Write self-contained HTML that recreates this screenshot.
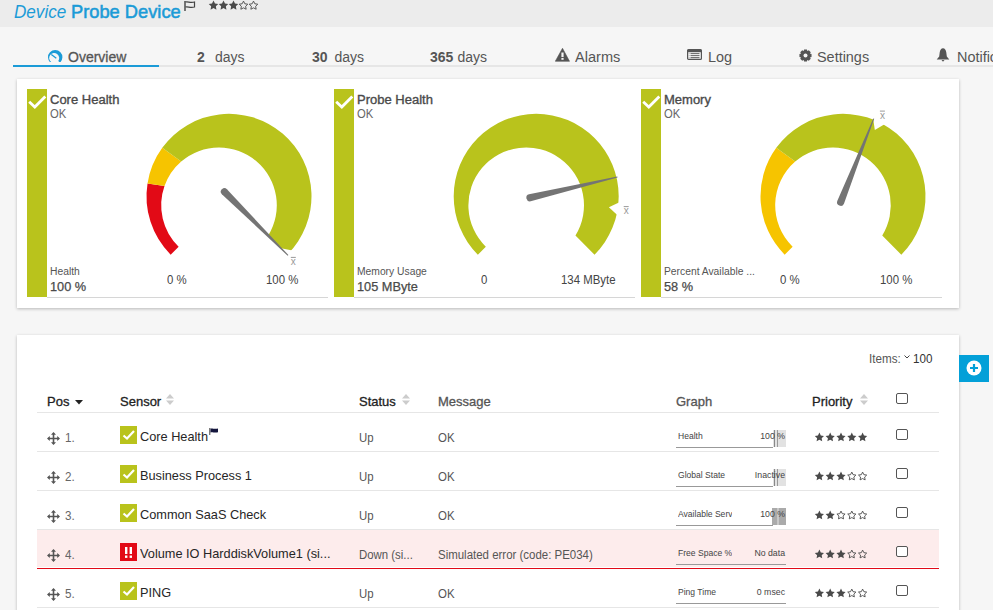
<!DOCTYPE html>
<html><head><meta charset="utf-8"><style>
*{margin:0;padding:0;box-sizing:border-box}
html,body{width:993px;height:610px;overflow:hidden;background:#f6f6f6;font-family:"Liberation Sans",sans-serif;position:relative}
.abs{position:absolute;white-space:nowrap}
.t{position:absolute;white-space:nowrap;transform-origin:0 0;line-height:1.15}
.tr{position:absolute;white-space:nowrap;transform-origin:100% 0;line-height:1.15;text-align:right}
#hdr{position:absolute;left:0;top:0;width:993px;height:27px;background:#ececec}
.title{position:absolute;top:1px;font-size:19px;color:#1b9bd7;white-space:nowrap;transform-origin:0 0}
.tab{position:absolute;top:49px;font-size:14px;color:#555;white-space:nowrap}
.tab b{font-weight:bold}
#tabline{position:absolute;left:13px;top:65px;width:980px;height:2px;background:#e6e6e6}
#tabact{position:absolute;left:13px;top:65px;width:146px;height:2px;background:#1b9bd7}
.panel{position:absolute;background:#fff;box-shadow:0 1px 3px rgba(0,0,0,0.25)}
.bar{position:absolute;top:89px;width:20px;height:208px;background:#b9c31c}
.tline{position:absolute;top:297px;width:281px;height:1px;background:#d6d6d6}
.rline{position:absolute;left:37px;width:902px;height:1px;background:#e6e6e6}
.ck{position:absolute;width:12px;height:11px;border:1.3px solid #555;border-radius:2px;background:#fff}
.gw-line{position:absolute;height:1px;background:#999}
</style></head><body>
<div id="hdr"></div>
<div class="title" style="left:13.5px;font-style:italic;transform:scaleX(0.9)">Device</div>
<div class="title" style="left:71px;font-weight:normal;-webkit-text-stroke:0.55px #1b9bd7;transform:scaleX(0.962)">Probe Device</div>
<svg class="abs" style="left:184px;top:1px" width="12" height="10" viewBox="0 0 12 10"><path d="M1,0 V10" stroke="#444" stroke-width="1.4"/><path d="M1.5,1 C4,0 6,2.5 10.5,1 V6 C6,7.5 4,5 1.5,6" stroke="#444" stroke-width="1.2" fill="none"/></svg>
<svg class="abs" style="left:208px;top:0px" width="52" height="11"><polygon points="5.50,0.60 6.97,3.58 10.26,4.05 7.88,6.37 8.44,9.65 5.50,8.10 2.56,9.65 3.12,6.37 0.74,4.05 4.03,3.58" fill="#4a4a4a"/>
<polygon points="15.50,0.60 16.97,3.58 20.26,4.05 17.88,6.37 18.44,9.65 15.50,8.10 12.56,9.65 13.12,6.37 10.74,4.05 14.03,3.58" fill="#4a4a4a"/>
<polygon points="25.50,0.60 26.97,3.58 30.26,4.05 27.88,6.37 28.44,9.65 25.50,8.10 22.56,9.65 23.12,6.37 20.74,4.05 24.03,3.58" fill="#4a4a4a"/>
<polygon points="35.50,1.10 36.82,3.78 39.78,4.21 37.64,6.30 38.15,9.24 35.50,7.85 32.85,9.24 33.36,6.30 31.22,4.21 34.18,3.78" fill="none" stroke="#4a4a4a" stroke-width="0.9" stroke-linejoin="round"/>
<polygon points="45.50,1.10 46.82,3.78 49.78,4.21 47.64,6.30 48.15,9.24 45.50,7.85 42.85,9.24 43.36,6.30 41.22,4.21 44.18,3.78" fill="none" stroke="#4a4a4a" stroke-width="0.9" stroke-linejoin="round"/></svg>

<div id="tabline"></div><div id="tabact"></div>
<svg class="abs" style="left:47px;top:49px" width="16" height="13" viewBox="0 0 16 13"><path d="M3.57,13.72 A7.2,7.2 0 1 1 12.83,13.72 L11.29,11.88 A5.0,5.0 0 1 0 4.18,12.99 Z" fill="#1b9bd7"/><path d="M4.3,5.5 L9.3,9.2" stroke="#1b9bd7" stroke-width="1.3"/></svg>
<div class="tab" style="left:68px;-webkit-text-stroke:0.3px #555">Overview</div>
<div class="tab" style="left:197px"><b>2</b></div><div class="tab" style="left:215px">days</div>
<div class="tab" style="left:312px"><b>30</b></div><div class="tab" style="left:334.5px">days</div>
<div class="tab" style="left:430px"><b>365</b></div><div class="tab" style="left:457.5px">days</div>
<svg class="abs" style="left:555px;top:47.5px" width="15" height="14" viewBox="0 0 15 14"><path d="M7.5,0.3 L14.5,13.3 H0.3 Z" fill="#555" stroke="#555" stroke-width="0.6" stroke-linejoin="round"/><rect x="6.4" y="4.5" width="2.2" height="4.6" fill="#f6f6f6"/><rect x="6.4" y="10" width="2.2" height="1.8" fill="#f6f6f6"/></svg>
<div class="tab" style="left:575px;transform:scaleX(1.04);transform-origin:0 0">Alarms</div>
<svg class="abs" style="left:687px;top:49px" width="15" height="11" viewBox="0 0 15 11"><rect x="0.6" y="0.6" width="13.8" height="9.8" rx="1" fill="none" stroke="#555" stroke-width="1.2"/><rect x="0.6" y="0.6" width="13.8" height="2.6" fill="#555"/><path d="M3.5,4.6 H12.5 M3.5,6.6 H12.5 M3.5,8.6 H12.5" stroke="#555" stroke-width="0.9"/><path d="M1.8,4.6 H2.4 M1.8,6.6 H2.4 M1.8,8.6 H2.4" stroke="#777" stroke-width="0.9"/></svg>
<div class="tab" style="left:708px;transform:scaleX(1.03);transform-origin:0 0">Log</div>
<svg class="abs" style="left:798.5px;top:48.5px" width="13" height="13" viewBox="0 0 13 13"><path d="M4.56,2.33 L5.11,0.46 L7.89,0.46 L8.44,2.33 L8.07,2.18 L9.79,1.24 L11.76,3.21 L10.82,4.93 L10.67,4.56 L12.54,5.11 L12.54,7.89 L10.67,8.44 L10.82,8.07 L11.76,9.79 L9.79,11.76 L8.07,10.82 L8.44,10.67 L7.89,12.54 L5.11,12.54 L4.56,10.67 L4.93,10.82 L3.21,11.76 L1.24,9.79 L2.18,8.07 L2.33,8.44 L0.46,7.89 L0.46,5.11 L2.33,4.56 L2.18,4.93 L1.24,3.21 L3.21,1.24 L4.93,2.18 Z" fill="#555"/><circle cx="6.5" cy="6.5" r="2" fill="#f6f6f6"/></svg>
<div class="tab" style="left:817px;transform:scaleX(1.03);transform-origin:0 0">Settings</div>
<svg class="abs" style="left:936px;top:48px" width="14" height="14" viewBox="0 0 14 14"><path d="M7,0.3 C8.8,0.3 10,2 10.3,4.5 L10.8,8.5 L13.3,11.6 H0.7 L3.2,8.5 L3.7,4.5 C4,2 5.2,0.3 7,0.3 Z" fill="#555"/><path d="M5.5,12 H8.5 L7,13.8 Z" fill="#555"/></svg>
<div class="tab" style="left:957px;transform:scaleX(1.03);transform-origin:0 0">Notifications</div>

<div class="panel" style="left:17px;top:79px;width:942px;height:229px"></div>
<div class="bar" style="left:27px"><svg width="20" height="22" viewBox="0 0 20 22" style="position:absolute;left:0;top:1.5px"><path d="M2.2,10.8 L7.8,16 L18.3,5.5" stroke="#fff" stroke-width="2.8" fill="none"/></svg></div>
<div class="t" style="left:50px;top:93px;font-size:12.5px;color:#4a4a4a;font-weight:normal;transform:scaleX(1.04);-webkit-text-stroke:0.35px #4a4a4a">Core Health</div>
<div class="t" style="left:50px;top:107px;font-size:12.5px;color:#666;font-weight:normal;transform:scaleX(0.9);">OK</div>
<div class="t" style="left:50px;top:265.5px;font-size:10px;color:#555;font-weight:normal;transform:scaleX(1.03);">Health</div>
<div class="t" style="left:50px;top:280px;font-size:12.5px;color:#4a4a4a;font-weight:normal;transform:scaleX(1.02);-webkit-text-stroke:0.25px #4a4a4a">100 %</div>
<div class="tline" style="left:47px"></div>

<div class="bar" style="left:334px"><svg width="20" height="22" viewBox="0 0 20 22" style="position:absolute;left:0;top:1.5px"><path d="M2.2,10.8 L7.8,16 L18.3,5.5" stroke="#fff" stroke-width="2.8" fill="none"/></svg></div>
<div class="t" style="left:357px;top:93px;font-size:12.5px;color:#4a4a4a;font-weight:normal;transform:scaleX(1.04);-webkit-text-stroke:0.35px #4a4a4a">Probe Health</div>
<div class="t" style="left:357px;top:107px;font-size:12.5px;color:#666;font-weight:normal;transform:scaleX(0.9);">OK</div>
<div class="t" style="left:357px;top:265.5px;font-size:10px;color:#555;font-weight:normal;transform:scaleX(1.03);">Memory Usage</div>
<div class="t" style="left:357px;top:280px;font-size:12.5px;color:#4a4a4a;font-weight:normal;transform:scaleX(1.02);-webkit-text-stroke:0.25px #4a4a4a">105 MByte</div>
<div class="tline" style="left:354px"></div>

<div class="bar" style="left:641px"><svg width="20" height="22" viewBox="0 0 20 22" style="position:absolute;left:0;top:1.5px"><path d="M2.2,10.8 L7.8,16 L18.3,5.5" stroke="#fff" stroke-width="2.8" fill="none"/></svg></div>
<div class="t" style="left:664px;top:93px;font-size:12.5px;color:#4a4a4a;font-weight:normal;transform:scaleX(1.04);-webkit-text-stroke:0.35px #4a4a4a">Memory</div>
<div class="t" style="left:664px;top:107px;font-size:12.5px;color:#666;font-weight:normal;transform:scaleX(0.9);">OK</div>
<div class="t" style="left:664px;top:265.5px;font-size:10px;color:#555;font-weight:normal;transform:scaleX(1.03);">Percent Available ...</div>
<div class="t" style="left:664px;top:280px;font-size:12.5px;color:#4a4a4a;font-weight:normal;transform:scaleX(1.02);-webkit-text-stroke:0.25px #4a4a4a">58 %</div>
<div class="tline" style="left:661px"></div>

<svg class="abs" style="left:0;top:0" width="993" height="310">
<path d="M170.66,254.64 A82.5,82.5 0 0 1 147.52,183.39 L164.49,186.08 A57.8,57.8 0 0 0 178.63,246.67 Z" fill="#e20a16"/>
<path d="M147.52,183.39 A82.5,82.5 0 0 1 162.26,147.81 L181.20,161.57 A57.8,57.8 0 0 0 164.49,186.08 Z" fill="#f6c400"/>
<path d="M162.26,147.81 A82.5,82.5 0 1 1 287.34,254.64 L268.25,235.55 A57.8,57.8 0 0 0 181.20,161.57 Z" fill="#b9c31c"/>
<path d="M292.49,250.53 L280.97,248.27 L283.23,259.79 Z" fill="#fff"/>
<text x="293.3" y="264.9" text-anchor="middle" font-size="10" fill="#999" font-family="Liberation Sans, sans-serif">x</text>
<line x1="290.8" y1="257.4" x2="295.8" y2="257.4" stroke="#999" stroke-width="1"/>
<path d="M221.86,194.25 L287.69,255.70 L288.40,254.99 L226.95,189.16 A3.6,3.6 0 0 0 221.86,194.25 Z" fill="#747474"/>
<path d="M477.86,254.64 A82.5,82.5 0 1 1 594.54,254.64 L575.45,235.55 A57.8,57.8 0 1 0 485.83,246.67 Z" fill="#b9c31c"/>
<path d="M619.49,202.20 L608.88,207.23 L617.54,215.15 Z" fill="#fff"/>
<text x="626.2" y="214.1" text-anchor="middle" font-size="10" fill="#999" font-family="Liberation Sans, sans-serif">x</text>
<line x1="623.7" y1="206.6" x2="628.7" y2="206.6" stroke="#999" stroke-width="1"/>
<path d="M530.71,201.31 L617.53,177.39 L617.30,176.42 L529.04,194.31 A3.6,3.6 0 0 0 530.71,201.31 Z" fill="#747474"/>
<path d="M784.66,254.64 A82.5,82.5 0 0 1 776.26,147.81 L795.20,161.57 A57.8,57.8 0 0 0 792.63,246.67 Z" fill="#f6c400"/>
<path d="M776.26,147.81 A82.5,82.5 0 1 1 901.34,254.64 L882.25,235.55 A57.8,57.8 0 0 0 795.20,161.57 Z" fill="#b9c31c"/>
<path d="M873.13,118.42 L874.82,130.04 L884.94,124.10 Z" fill="#fff"/>
<text x="882.4" y="118.6" text-anchor="middle" font-size="10" fill="#999" font-family="Liberation Sans, sans-serif">x</text>
<line x1="879.9" y1="111.1" x2="884.9" y2="111.1" stroke="#999" stroke-width="1"/>
<path d="M843.95,203.67 L874.20,118.85 L873.27,118.48 L837.26,201.02 A3.6,3.6 0 0 0 843.95,203.67 Z" fill="#747474"/>
</svg>
<div class="t" style="left:167px;top:273.5px;font-size:12px;color:#444;font-weight:normal;transform:scaleX(0.95);">0 %</div>
<div class="t" style="left:266px;top:273.5px;font-size:12px;color:#444;font-weight:normal;transform:scaleX(0.95);">100 %</div>
<div class="t" style="left:481px;top:273.5px;font-size:12px;color:#444;font-weight:normal;transform:scaleX(0.95);">0</div>
<div class="t" style="left:561px;top:273.5px;font-size:12px;color:#444;font-weight:normal;transform:scaleX(0.95);">134 MByte</div>
<div class="t" style="left:780px;top:273.5px;font-size:12px;color:#444;font-weight:normal;transform:scaleX(0.95);">0 %</div>
<div class="t" style="left:880px;top:273.5px;font-size:12px;color:#444;font-weight:normal;transform:scaleX(0.95);">100 %</div>
<div class="panel" style="left:17px;top:335px;width:942px;height:290px"></div>
<div class="t" style="left:869px;top:353px;font-size:12px;color:#555;font-weight:normal;transform:scaleX(0.97);">Items:</div>
<svg class="abs" style="left:904px;top:355px" width="6" height="4" viewBox="0 0 6 4"><path d="M0.5,0.5 L3,3 L5.5,0.5" stroke="#444" stroke-width="1" fill="none"/></svg>
<div class="t" style="left:913px;top:353px;font-size:12px;color:#333;font-weight:normal;transform:scaleX(0.97);">100</div>
<div class="abs" style="left:959px;top:355px;width:30px;height:27px;background:#03a0d8"></div>
<svg class="abs" style="left:965.5px;top:360px" width="16" height="16" viewBox="0 0 16 16"><circle cx="8" cy="8" r="7.5" fill="#fff"/><path d="M8,4 V12 M4,8 H12" stroke="#03a0d8" stroke-width="2.2"/></svg>
<div class="t" style="left:47px;top:394.5px;font-size:13px;color:#222;font-weight:normal;transform:scaleX(1.0);-webkit-text-stroke:0.3px #222">Pos</div>
<svg class="abs" style="left:75px;top:400px" width="8" height="5" viewBox="0 0 8 5"><path d="M0,0 H8 L4,4.5Z" fill="#222"/></svg>
<div class="t" style="left:120px;top:394.5px;font-size:13px;color:#222;font-weight:normal;transform:scaleX(1.0);-webkit-text-stroke:0.3px #222">Sensor</div>
<svg class="abs" style="left:166px;top:394px" width="8" height="11" viewBox="0 0 8 11"><path d="M0,4.5 L4,0 L8,4.5Z M0,6.5 L4,11 L8,6.5Z" fill="#ccc"/></svg>
<div class="t" style="left:359px;top:394.5px;font-size:13px;color:#222;font-weight:normal;transform:scaleX(1.0);-webkit-text-stroke:0.3px #222">Status</div>
<svg class="abs" style="left:402px;top:394px" width="8" height="11" viewBox="0 0 8 11"><path d="M0,4.5 L4,0 L8,4.5Z M0,6.5 L4,11 L8,6.5Z" fill="#ccc"/></svg>
<div class="t" style="left:438px;top:394.5px;font-size:13px;color:#555;font-weight:normal;transform:scaleX(1.0);-webkit-text-stroke:0.3px #555">Message</div>
<div class="t" style="left:676px;top:394.5px;font-size:13px;color:#555;font-weight:normal;transform:scaleX(1.0);-webkit-text-stroke:0.3px #555">Graph</div>
<div class="t" style="left:812px;top:394.5px;font-size:13px;color:#222;font-weight:normal;transform:scaleX(1.0);-webkit-text-stroke:0.3px #222">Priority</div>
<svg class="abs" style="left:860px;top:394px" width="8" height="11" viewBox="0 0 8 11"><path d="M0,4.5 L4,0 L8,4.5Z M0,6.5 L4,11 L8,6.5Z" fill="#ccc"/></svg>
<div class="ck" style="left:896px;top:393px"></div>
<div class="rline" style="top:412px"></div>
<div class="rline" style="top:451px"></div>
<svg class="abs" style="left:47px;top:432px" width="13" height="13" viewBox="0 0 13 13"><path d="M6.5,1.5 V11.5 M1.5,6.5 H11.5" stroke="#555" stroke-width="1.6"/><path d="M6.5,0 L9,2.8 H4Z M6.5,13 L9,10.2 H4Z M0,6.5 L2.8,4 V9Z M13,6.5 L10.2,4 V9Z" fill="#555"/></svg>
<div class="t" style="left:65px;top:432px;font-size:12px;color:#666;font-weight:normal;transform:scaleX(0.97);">1.</div>
<div class="abs" style="left:120px;top:426px;width:17px;height:18px;background:#b9c31c"></div><svg class="abs" style="left:120px;top:426px" width="17" height="18" viewBox="0 0 17 18"><path d="M3.5,9.5 L7,12.5 L14,5" stroke="#fff" stroke-width="2.2" fill="none"/></svg>
<div class="t" style="left:140px;top:430px;font-size:13px;color:#262626;font-weight:normal;transform:scaleX(0.98);">Core Health</div>
<svg class="abs" style="left:209px;top:428px" width="10" height="7" viewBox="0 0 10 7"><path d="M0.8,0 V7" stroke="#444" stroke-width="1"/><path d="M1.5,0.5 C3.5,0 5,1.3 9,0.6 V4.3 C5,5 3.5,3.7 1.5,4.4Z" fill="#14163d"/></svg>
<div class="t" style="left:359px;top:432px;font-size:12px;color:#555;font-weight:normal;transform:scaleX(0.95);">Up</div>
<div class="t" style="left:438px;top:432px;font-size:12px;color:#555;font-weight:normal;transform:scaleX(0.955);">OK</div>
<div class="abs" style="left:678px;top:431px;width:54px;height:13px;overflow:hidden"><div class="t" style="left:0px;top:0px;font-size:9.5px;color:#444;font-weight:normal;transform:scaleX(0.9);">Health</div>
</div>
<div class="gw-line" style="left:676px;top:447px;width:97px"></div>
<div class="abs" style="left:773px;top:430px;width:13px;height:17px;background:#e2e2e2"></div>
<div class="abs" style="left:774px;top:430px;width:1px;height:17px;background:#888"></div>
<div class="abs" style="left:777px;top:430px;width:1px;height:17px;background:#999"></div>
<div class="tr" style="left:700px;width:85px;top:431px;font-size:9.5px;color:#444;transform:scaleX(0.92)">100 %</div>
<svg class="abs" style="left:814px;top:432px" width="56" height="11"><polygon points="5.40,0.60 6.81,3.46 9.97,3.92 7.68,6.14 8.22,9.28 5.40,7.80 2.58,9.28 3.12,6.14 0.83,3.92 3.99,3.46" fill="#4a4a4a"/>
<polygon points="16.20,0.60 17.61,3.46 20.77,3.92 18.48,6.14 19.02,9.28 16.20,7.80 13.38,9.28 13.92,6.14 11.63,3.92 14.79,3.46" fill="#4a4a4a"/>
<polygon points="27.00,0.60 28.41,3.46 31.57,3.92 29.28,6.14 29.82,9.28 27.00,7.80 24.18,9.28 24.72,6.14 22.43,3.92 25.59,3.46" fill="#4a4a4a"/>
<polygon points="37.80,0.60 39.21,3.46 42.37,3.92 40.08,6.14 40.62,9.28 37.80,7.80 34.98,9.28 35.52,6.14 33.23,3.92 36.39,3.46" fill="#4a4a4a"/>
<polygon points="48.60,0.60 50.01,3.46 53.17,3.92 50.88,6.14 51.42,9.28 48.60,7.80 45.78,9.28 46.32,6.14 44.03,3.92 47.19,3.46" fill="#4a4a4a"/></svg>
<div class="ck" style="left:896px;top:429px"></div>
<div class="rline" style="top:490px"></div>
<svg class="abs" style="left:47px;top:471px" width="13" height="13" viewBox="0 0 13 13"><path d="M6.5,1.5 V11.5 M1.5,6.5 H11.5" stroke="#555" stroke-width="1.6"/><path d="M6.5,0 L9,2.8 H4Z M6.5,13 L9,10.2 H4Z M0,6.5 L2.8,4 V9Z M13,6.5 L10.2,4 V9Z" fill="#555"/></svg>
<div class="t" style="left:65px;top:471px;font-size:12px;color:#666;font-weight:normal;transform:scaleX(0.97);">2.</div>
<div class="abs" style="left:120px;top:465px;width:17px;height:18px;background:#b9c31c"></div><svg class="abs" style="left:120px;top:465px" width="17" height="18" viewBox="0 0 17 18"><path d="M3.5,9.5 L7,12.5 L14,5" stroke="#fff" stroke-width="2.2" fill="none"/></svg>
<div class="t" style="left:140px;top:469px;font-size:13px;color:#262626;font-weight:normal;transform:scaleX(0.98);">Business Process 1</div>
<div class="t" style="left:359px;top:471px;font-size:12px;color:#555;font-weight:normal;transform:scaleX(0.95);">Up</div>
<div class="t" style="left:438px;top:471px;font-size:12px;color:#555;font-weight:normal;transform:scaleX(0.955);">OK</div>
<div class="abs" style="left:678px;top:470px;width:54px;height:13px;overflow:hidden"><div class="t" style="left:0px;top:0px;font-size:9.5px;color:#444;font-weight:normal;transform:scaleX(0.9);">Global State</div>
</div>
<div class="gw-line" style="left:676px;top:486px;width:97px"></div>
<div class="abs" style="left:773px;top:469px;width:13px;height:17px;background:#e2e2e2"></div>
<div class="abs" style="left:774px;top:469px;width:1px;height:17px;background:#888"></div>
<div class="abs" style="left:777px;top:469px;width:1px;height:17px;background:#999"></div>
<div class="tr" style="left:700px;width:85px;top:470px;font-size:9.5px;color:#444;transform:scaleX(0.92)">Inactive</div>
<svg class="abs" style="left:814px;top:471px" width="56" height="11"><polygon points="5.40,0.60 6.81,3.46 9.97,3.92 7.68,6.14 8.22,9.28 5.40,7.80 2.58,9.28 3.12,6.14 0.83,3.92 3.99,3.46" fill="#4a4a4a"/>
<polygon points="16.20,0.60 17.61,3.46 20.77,3.92 18.48,6.14 19.02,9.28 16.20,7.80 13.38,9.28 13.92,6.14 11.63,3.92 14.79,3.46" fill="#4a4a4a"/>
<polygon points="27.00,0.60 28.41,3.46 31.57,3.92 29.28,6.14 29.82,9.28 27.00,7.80 24.18,9.28 24.72,6.14 22.43,3.92 25.59,3.46" fill="#4a4a4a"/>
<polygon points="37.80,1.10 39.06,3.66 41.89,4.07 39.84,6.06 40.33,8.88 37.80,7.55 35.27,8.88 35.76,6.06 33.71,4.07 36.54,3.66" fill="none" stroke="#4a4a4a" stroke-width="0.9" stroke-linejoin="round"/>
<polygon points="48.60,1.10 49.86,3.66 52.69,4.07 50.64,6.06 51.13,8.88 48.60,7.55 46.07,8.88 46.56,6.06 44.51,4.07 47.34,3.66" fill="none" stroke="#4a4a4a" stroke-width="0.9" stroke-linejoin="round"/></svg>
<div class="ck" style="left:896px;top:468px"></div>
<div class="rline" style="top:529px"></div>
<svg class="abs" style="left:47px;top:510px" width="13" height="13" viewBox="0 0 13 13"><path d="M6.5,1.5 V11.5 M1.5,6.5 H11.5" stroke="#555" stroke-width="1.6"/><path d="M6.5,0 L9,2.8 H4Z M6.5,13 L9,10.2 H4Z M0,6.5 L2.8,4 V9Z M13,6.5 L10.2,4 V9Z" fill="#555"/></svg>
<div class="t" style="left:65px;top:510px;font-size:12px;color:#666;font-weight:normal;transform:scaleX(0.97);">3.</div>
<div class="abs" style="left:120px;top:504px;width:17px;height:18px;background:#b9c31c"></div><svg class="abs" style="left:120px;top:504px" width="17" height="18" viewBox="0 0 17 18"><path d="M3.5,9.5 L7,12.5 L14,5" stroke="#fff" stroke-width="2.2" fill="none"/></svg>
<div class="t" style="left:140px;top:508px;font-size:13px;color:#262626;font-weight:normal;transform:scaleX(0.98);">Common SaaS Check</div>
<div class="t" style="left:359px;top:510px;font-size:12px;color:#555;font-weight:normal;transform:scaleX(0.95);">Up</div>
<div class="t" style="left:438px;top:510px;font-size:12px;color:#555;font-weight:normal;transform:scaleX(0.955);">OK</div>
<div class="abs" style="left:678px;top:509px;width:54px;height:13px;overflow:hidden"><div class="t" style="left:0px;top:0px;font-size:9.5px;color:#444;font-weight:normal;transform:scaleX(0.9);">Available Serv</div>
</div>
<div class="gw-line" style="left:676px;top:525px;width:97px"></div>
<div class="abs" style="left:772px;top:508px;width:14px;height:17px;background:#aaa"></div>
<div class="abs" style="left:777px;top:508px;width:2px;height:17px;background:#c8c8c8"></div>
<div class="tr" style="left:700px;width:85px;top:509px;font-size:9.5px;color:#444;transform:scaleX(0.92)">100 %</div>
<svg class="abs" style="left:814px;top:510px" width="56" height="11"><polygon points="5.40,0.60 6.81,3.46 9.97,3.92 7.68,6.14 8.22,9.28 5.40,7.80 2.58,9.28 3.12,6.14 0.83,3.92 3.99,3.46" fill="#4a4a4a"/>
<polygon points="16.20,0.60 17.61,3.46 20.77,3.92 18.48,6.14 19.02,9.28 16.20,7.80 13.38,9.28 13.92,6.14 11.63,3.92 14.79,3.46" fill="#4a4a4a"/>
<polygon points="27.00,1.10 28.26,3.66 31.09,4.07 29.04,6.06 29.53,8.88 27.00,7.55 24.47,8.88 24.96,6.06 22.91,4.07 25.74,3.66" fill="none" stroke="#4a4a4a" stroke-width="0.9" stroke-linejoin="round"/>
<polygon points="37.80,1.10 39.06,3.66 41.89,4.07 39.84,6.06 40.33,8.88 37.80,7.55 35.27,8.88 35.76,6.06 33.71,4.07 36.54,3.66" fill="none" stroke="#4a4a4a" stroke-width="0.9" stroke-linejoin="round"/>
<polygon points="48.60,1.10 49.86,3.66 52.69,4.07 50.64,6.06 51.13,8.88 48.60,7.55 46.07,8.88 46.56,6.06 44.51,4.07 47.34,3.66" fill="none" stroke="#4a4a4a" stroke-width="0.9" stroke-linejoin="round"/></svg>
<div class="ck" style="left:896px;top:507px"></div>
<div class="abs" style="left:37px;top:530px;width:902px;height:37px;background:#fdecec"></div>
<div class="abs" style="left:37px;top:568px;width:902px;height:1px;background:#e10a18"></div>
<svg class="abs" style="left:47px;top:549px" width="13" height="13" viewBox="0 0 13 13"><path d="M6.5,1.5 V11.5 M1.5,6.5 H11.5" stroke="#555" stroke-width="1.6"/><path d="M6.5,0 L9,2.8 H4Z M6.5,13 L9,10.2 H4Z M0,6.5 L2.8,4 V9Z M13,6.5 L10.2,4 V9Z" fill="#555"/></svg>
<div class="t" style="left:65px;top:549px;font-size:12px;color:#666;font-weight:normal;transform:scaleX(0.97);">4.</div>
<div class="abs" style="left:120px;top:543px;width:17px;height:18px;background:#e20a16"></div><svg class="abs" style="left:120px;top:543px" width="17" height="18" viewBox="0 0 17 18"><rect x="5" y="4" width="2.4" height="7" fill="#fff"/><rect x="9.6" y="4" width="2.4" height="7" fill="#fff"/><rect x="5" y="12.5" width="2.4" height="2.4" fill="#fff"/><rect x="9.6" y="12.5" width="2.4" height="2.4" fill="#fff"/></svg>
<div class="t" style="left:140px;top:547px;font-size:13px;color:#262626;font-weight:normal;transform:scaleX(0.98);">Volume IO HarddiskVolume1 (si...</div>
<div class="t" style="left:359px;top:549px;font-size:12px;color:#555;font-weight:normal;transform:scaleX(0.95);">Down (si...</div>
<div class="t" style="left:438px;top:549px;font-size:12px;color:#555;font-weight:normal;transform:scaleX(0.955);">Simulated error (code: PE034)</div>
<div class="abs" style="left:678px;top:548px;width:54px;height:13px;overflow:hidden"><div class="t" style="left:0px;top:0px;font-size:9.5px;color:#444;font-weight:normal;transform:scaleX(0.9);">Free Space %</div>
</div>
<div class="gw-line" style="left:676px;top:564px;width:110px"></div>
<div class="tr" style="left:700px;width:85px;top:548px;font-size:9.5px;color:#444;transform:scaleX(0.92)">No data</div>
<svg class="abs" style="left:814px;top:549px" width="56" height="11"><polygon points="5.40,0.60 6.81,3.46 9.97,3.92 7.68,6.14 8.22,9.28 5.40,7.80 2.58,9.28 3.12,6.14 0.83,3.92 3.99,3.46" fill="#4a4a4a"/>
<polygon points="16.20,0.60 17.61,3.46 20.77,3.92 18.48,6.14 19.02,9.28 16.20,7.80 13.38,9.28 13.92,6.14 11.63,3.92 14.79,3.46" fill="#4a4a4a"/>
<polygon points="27.00,0.60 28.41,3.46 31.57,3.92 29.28,6.14 29.82,9.28 27.00,7.80 24.18,9.28 24.72,6.14 22.43,3.92 25.59,3.46" fill="#4a4a4a"/>
<polygon points="37.80,1.10 39.06,3.66 41.89,4.07 39.84,6.06 40.33,8.88 37.80,7.55 35.27,8.88 35.76,6.06 33.71,4.07 36.54,3.66" fill="none" stroke="#4a4a4a" stroke-width="0.9" stroke-linejoin="round"/>
<polygon points="48.60,1.10 49.86,3.66 52.69,4.07 50.64,6.06 51.13,8.88 48.60,7.55 46.07,8.88 46.56,6.06 44.51,4.07 47.34,3.66" fill="none" stroke="#4a4a4a" stroke-width="0.9" stroke-linejoin="round"/></svg>
<div class="ck" style="left:896px;top:546px"></div>
<div class="rline" style="top:607px"></div>
<svg class="abs" style="left:47px;top:588px" width="13" height="13" viewBox="0 0 13 13"><path d="M6.5,1.5 V11.5 M1.5,6.5 H11.5" stroke="#555" stroke-width="1.6"/><path d="M6.5,0 L9,2.8 H4Z M6.5,13 L9,10.2 H4Z M0,6.5 L2.8,4 V9Z M13,6.5 L10.2,4 V9Z" fill="#555"/></svg>
<div class="t" style="left:65px;top:588px;font-size:12px;color:#666;font-weight:normal;transform:scaleX(0.97);">5.</div>
<div class="abs" style="left:120px;top:582px;width:17px;height:18px;background:#b9c31c"></div><svg class="abs" style="left:120px;top:582px" width="17" height="18" viewBox="0 0 17 18"><path d="M3.5,9.5 L7,12.5 L14,5" stroke="#fff" stroke-width="2.2" fill="none"/></svg>
<div class="t" style="left:140px;top:586px;font-size:13px;color:#262626;font-weight:normal;transform:scaleX(0.98);">PING</div>
<div class="t" style="left:359px;top:588px;font-size:12px;color:#555;font-weight:normal;transform:scaleX(0.95);">Up</div>
<div class="t" style="left:438px;top:588px;font-size:12px;color:#555;font-weight:normal;transform:scaleX(0.955);">OK</div>
<div class="abs" style="left:678px;top:587px;width:54px;height:13px;overflow:hidden"><div class="t" style="left:0px;top:0px;font-size:9.5px;color:#444;font-weight:normal;transform:scaleX(0.9);">Ping Time</div>
</div>
<div class="gw-line" style="left:676px;top:603px;width:110px"></div>
<div class="tr" style="left:700px;width:85px;top:587px;font-size:9.5px;color:#444;transform:scaleX(0.92)">0 msec</div>
<svg class="abs" style="left:814px;top:588px" width="56" height="11"><polygon points="5.40,0.60 6.81,3.46 9.97,3.92 7.68,6.14 8.22,9.28 5.40,7.80 2.58,9.28 3.12,6.14 0.83,3.92 3.99,3.46" fill="#4a4a4a"/>
<polygon points="16.20,0.60 17.61,3.46 20.77,3.92 18.48,6.14 19.02,9.28 16.20,7.80 13.38,9.28 13.92,6.14 11.63,3.92 14.79,3.46" fill="#4a4a4a"/>
<polygon points="27.00,0.60 28.41,3.46 31.57,3.92 29.28,6.14 29.82,9.28 27.00,7.80 24.18,9.28 24.72,6.14 22.43,3.92 25.59,3.46" fill="#4a4a4a"/>
<polygon points="37.80,1.10 39.06,3.66 41.89,4.07 39.84,6.06 40.33,8.88 37.80,7.55 35.27,8.88 35.76,6.06 33.71,4.07 36.54,3.66" fill="none" stroke="#4a4a4a" stroke-width="0.9" stroke-linejoin="round"/>
<polygon points="48.60,1.10 49.86,3.66 52.69,4.07 50.64,6.06 51.13,8.88 48.60,7.55 46.07,8.88 46.56,6.06 44.51,4.07 47.34,3.66" fill="none" stroke="#4a4a4a" stroke-width="0.9" stroke-linejoin="round"/></svg>
<div class="ck" style="left:896px;top:585px"></div>
</body></html>
